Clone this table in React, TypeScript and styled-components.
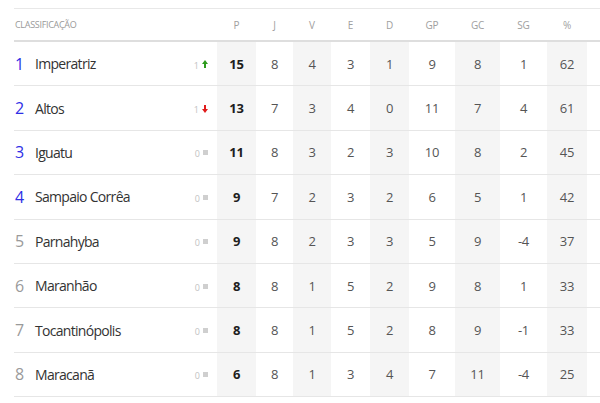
import React from 'react';
import styled, { createGlobalStyle } from 'styled-components';

const GlobalStyle = createGlobalStyle`
  html, body {
    margin: 0;
    padding: 0;
    background: #fff;
    overflow: hidden;
  }
  body {
    font-family: 'Open Sans', 'Noto Sans', Arial, sans-serif;
  }
`;

const COLS = '21px 150px 32px 39px 37px 38px 39px 39px 46px 45px 47px 40px 13px';

const Wrapper = styled.div`
  padding: 8px 0 0 14px;
  width: 600px;
  box-sizing: border-box;
`;

const Table = styled.div`
  border-top: 1px solid #e8e8e8;
`;

const HeadRow = styled.div`
  display: grid;
  grid-template-columns: ${COLS};
  height: 33px;
  box-sizing: border-box;
  border-bottom: 2px solid #dedede;
  align-items: center;
  color: #a0a0a0;
  font-size: 10px;
`;

const HeadTitle = styled.div`
  grid-column: span 3;
  padding-left: 1px;
  font-size: 9px;
  text-transform: uppercase;
  letter-spacing: -0.3px;
  color: #999;
`;

const HeadCell = styled.div`
  text-align: center;
  font-size: 10px;
  letter-spacing: -0.2px;
`;

const Row = styled.div`
  display: grid;
  grid-template-columns: ${COLS};
  height: 44.4px;
  box-sizing: border-box;
  border-bottom: 1px solid #e6e6e6;
`;

const Pos = styled.div<{ $top: boolean }>`
  display: flex;
  align-items: center;
  padding-left: 1px;
  font-size: 16px;
  font-weight: 400;
  color: ${(p) => (p.$top ? '#2f2fe6' : '#9a9a9a')};
`;

const Name = styled.div`
  display: flex;
  align-items: center;
  padding-left: 0;
  font-size: 14px;
  letter-spacing: -0.7px;
  color: #333;
  white-space: nowrap;
`;

const Var = styled.div`
  display: flex;
  align-items: center;
  justify-content: flex-end;
  gap: 3px;
  padding-right: 9px;
  padding-top: 3px;
  font-size: 9px;
  color: #c2c2c2;
`;

const Square = styled.span`
  display: inline-block;
  width: 5px;
  height: 5px;
  background: #cfcfcf;
  margin-bottom: 2px;
`;

const Cell = styled.div<{ $shade?: boolean; $bold?: boolean }>`
  display: flex;
  align-items: center;
  justify-content: center;
  font-size: 13px;
  letter-spacing: -0.2px;
  background: ${(p) => (p.$shade ? '#f5f5f5' : 'transparent')};
  color: ${(p) => (p.$bold ? '#1e1e1e' : '#555')};
  font-weight: ${(p) => (p.$bold ? 700 : 400)};
`;

type Team = {
  name: string;
  var: number;
  dir: 'up' | 'down' | 'none';
  stats: string[];
};

const teams: Team[] = [
  { name: 'Imperatriz', var: 1, dir: 'up', stats: ['15', '8', '4', '3', '1', '9', '8', '1', '62'] },
  { name: 'Altos', var: 1, dir: 'down', stats: ['13', '7', '3', '4', '0', '11', '7', '4', '61'] },
  { name: 'Iguatu', var: 0, dir: 'none', stats: ['11', '8', '3', '2', '3', '10', '8', '2', '45'] },
  { name: 'Sampaio Corrêa', var: 0, dir: 'none', stats: ['9', '7', '2', '3', '2', '6', '5', '1', '42'] },
  { name: 'Parnahyba', var: 0, dir: 'none', stats: ['9', '8', '2', '3', '3', '5', '9', '-4', '37'] },
  { name: 'Maranhão', var: 0, dir: 'none', stats: ['8', '8', '1', '5', '2', '9', '8', '1', '33'] },
  { name: 'Tocantinópolis', var: 0, dir: 'none', stats: ['8', '8', '1', '5', '2', '8', '9', '-1', '33'] },
  { name: 'Maracanã', var: 0, dir: 'none', stats: ['6', '8', '1', '3', '4', '7', '11', '-4', '25'] },
];

const headers = ['P', 'J', 'V', 'E', 'D', 'GP', 'GC', 'SG', '%'];

function Arrow({ dir }: { dir: 'up' | 'down' }) {
  const color = dir === 'up' ? '#2e9b1e' : '#e01b1b';
  return (
    <svg width="6" height="8" viewBox="0 0 6 8" style={{ marginBottom: 2 }}>
      <g transform={dir === 'down' ? 'rotate(180 3 4)' : undefined}>
        <path d="M3 0 L6 4 L4 4 L4 8 L2 8 L2 4 L0 4 Z" fill={color} />
      </g>
    </svg>
  );
}

export default function App() {
  return (
    <Wrapper>
      <GlobalStyle />
      <Table>
        <HeadRow>
          <HeadTitle>Classificação</HeadTitle>
          {headers.map((h) => (
            <HeadCell key={h}>{h}</HeadCell>
          ))}
          <div />
        </HeadRow>
        {teams.map((t, i) => (
          <Row key={t.name}>
            <Pos $top={i < 4}>{i + 1}</Pos>
            <Name>{t.name}</Name>
            <Var>
              <span>{t.var}</span>
              {t.dir === 'none' ? <Square /> : <Arrow dir={t.dir} />}
            </Var>
            {t.stats.map((s, j) => (
              <Cell key={j} $shade={j % 2 === 0} $bold={j === 0}>
                {s}
              </Cell>
            ))}
            <div />
          </Row>
        ))}
      </Table>
    </Wrapper>
  );
}
